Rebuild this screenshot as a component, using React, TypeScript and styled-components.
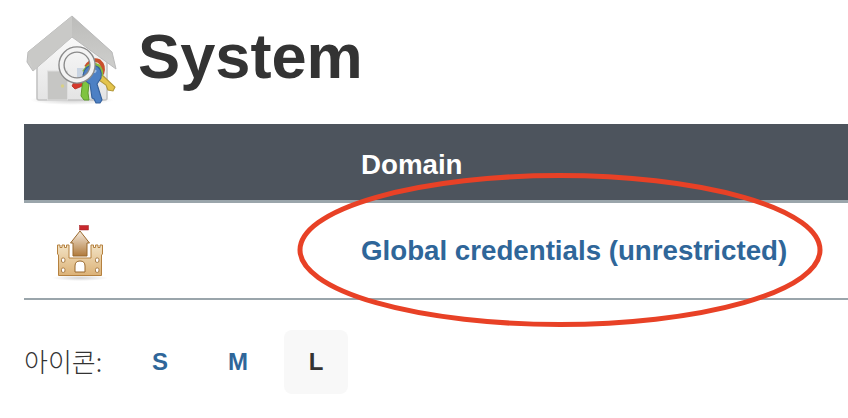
import React from "react";
import styled, { createGlobalStyle } from "styled-components";

const Global = createGlobalStyle`
  html, body { margin: 0; padding: 0; background: #fff; overflow: hidden; }
  body { font-family: "Liberation Sans", Arial, "Noto Sans CJK KR", sans-serif; color: #333; }
`;
const Page = styled.div`
  position: relative;
  width: 848px;
  height: 418px;
  overflow: hidden;
  padding-left: 24px;
  box-sizing: border-box;
`;
const Header = styled.header`
  display: flex;
  align-items: flex-start;
  height: 124px;
  box-sizing: border-box;
  padding-top: 10px;
  gap: 14px;
`;
const Title = styled.h1`
  margin: 15px 0 0;
  font-size: 63.2px;
  line-height: 1;
  font-weight: 700;
  color: #333;
`;
const Table = styled.div`
  width: 824px;
`;
const Head = styled.div`
  display: grid;
  grid-template-columns: 337px 1fr;
  height: 56px;
  padding-bottom: 20px;
  background: #4d545d;
  border-bottom: 3px solid #9aa5ab;
  align-items: end;
  font-size: 27.7px;
  font-weight: 700;
  color: #fff;
  line-height: 30px;
`;
const HeadCell = styled.div``;
const Row = styled.div`
  display: grid;
  grid-template-columns: 337px 1fr;
  height: 95px;
  align-items: center;
  border-bottom: 2px solid #9aa5ab;
`;
const IconCell = styled.div`
  display: flex;
  padding-left: 26px;
`;
const CredLink = styled.a`
  font-size: 27.7px;
  font-weight: 700;
  color: #2f6699;
  text-decoration: none;
`;
const Footer = styled.div`
  display: flex;
  align-items: center;
  height: 64px;
  margin-top: 30px;
`;
const Label = styled.span`
  font-family: "Noto Sans CJK KR", sans-serif;
  font-size: 26px;
  font-weight: 300;
  color: #333;
  width: 104px;
  padding-bottom: 4px;
  white-space: nowrap;
`;
const SizeButton = styled.span<{ $active?: boolean }>`
  display: flex;
  align-items: center;
  justify-content: center;
  width: 64px;
  height: 64px;
  margin-right: 14px;
  border-radius: 8px;
  font-size: 24px;
  font-weight: 700;
  color: ${(p) => (p.$active ? "#333" : "#2f6699")};
  background: ${(p) => (p.$active ? "#f8f8f8" : "transparent")};
`;
const Annotation = styled.svg`
  position: absolute;
  left: 0;
  top: 0;
  pointer-events: none;
`;
const Glyph = styled.svg`
  flex: none;
  display: block;
`;

const HouseIcon = () => (
  <Glyph width="100" height="100" viewBox="24 10 100 100">
    <defs>
      <radialGradient id="hshadow"><stop offset="0" stopColor="#bdbdbd" /><stop offset="1" stopColor="#fff" /></radialGradient>
      <linearGradient id="hwall" x1="0" y1="0" x2="0" y2="1"><stop offset="0" stopColor="#fafafa" /><stop offset="1" stopColor="#e4e4e4" /></linearGradient>
      <linearGradient id="hroof" x1="0" y1="0" x2="0" y2="1"><stop offset="0" stopColor="#bcbcba" /><stop offset="1" stopColor="#cfcfcd" /></linearGradient>
    </defs>
    <ellipse cx="72" cy="100" rx="42" ry="5" fill="url(#hshadow)" opacity="0.7" />
    <path d="M37 60 L72 34 L107 60 L107 98 Q107 100 105 100 L39 100 Q37 100 37 98 Z" fill="url(#hwall)" stroke="#c4c4c4" strokeWidth="1.6" />
    <rect x="47.5" y="71" width="20" height="29" fill="#c6c6c4" stroke="#dedede" strokeWidth="1" />
    <circle cx="62.5" cy="86" r="1.7" fill="#d8d088" />
    <path d="M72 16 L112 52 L116 69 L72 37 L33 71 L27 62 L28 52 Z" fill="url(#hroof)" stroke="#bababa" strokeWidth="1" strokeLinejoin="round" />
    <path d="M72 16 L72 37 L33 71 L28 52 Z" fill="#c9c9c7" />
    <rect x="77" y="68" width="12" height="14" fill="#c9d4e2" />
    <path d="M100 73 L115 87 L113 91 L108 90 L106 85 L96 78 Z" fill="#e4c44c" stroke="#b3983a" strokeWidth="1.1" />
    <path d="M74 82 L86 77 L90 82 L80 87 L75 89 L72 86 Z" fill="#d5392c" stroke="#b42c22" strokeWidth="0.8" />
    <path d="M84 72 L89 83 L88 93 L89 100 L84 100 L81 96 L82 87 L83 82 Z" fill="#7fc440" stroke="#5f9c2c" strokeWidth="1" />
    <path d="M86 67 Q92 58 99 61 Q105 66 102 74" fill="none" stroke="#c9502c" strokeWidth="4" />
    <path d="M84 72 Q90 62 98 66 Q102 70 101 76" fill="none" stroke="#86b93c" strokeWidth="4" />
    <path d="M83 75 Q85 65 94 65 Q103 68 101 78 L97 84 L102 100 L100 103 L96 103 L94 99 L92 98 L90 84 Q84 81 83 75 Z" fill="#4d80c4" stroke="#34609c" strokeWidth="1.1" />
    <path d="M88 74 Q92 69 96 72" fill="none" stroke="#fff" strokeOpacity="0.5" strokeWidth="3" />
    <circle cx="77" cy="65" r="15.5" fill="none" stroke="#8a8a8a" strokeWidth="6.5" />
    <circle cx="77" cy="65" r="15.5" fill="none" stroke="#f3f3f3" strokeWidth="3.8" />
  </Glyph>
);

const CastleIcon = () => (
  <Glyph width="60" height="64" viewBox="50 216 60 64">
    <defs>
      <linearGradient id="cbody" x1="0" y1="0" x2="0" y2="1"><stop offset="0" stopColor="#f2e2c4" /><stop offset="1" stopColor="#dcb277" /></linearGradient>
      <linearGradient id="ctower" x1="0" y1="0" x2="0" y2="1"><stop offset="0" stopColor="#f6ecdf" /><stop offset="1" stopColor="#b07a3c" /></linearGradient>
      <radialGradient id="cshadow"><stop offset="0" stopColor="#d4d4d4" /><stop offset="1" stopColor="#fff" /></radialGradient>
    </defs>
    <ellipse cx="80" cy="275" rx="28" ry="3" fill="url(#cshadow)" />
    <path d="M57.5 242 H60 V244.5 H62 V242 H64.5 V244.5 H66.5 V242 H69 V255 H91 V242 H93.5 V244.5 H95.5 V242 H98 V244.5 H100 V242 H102.5 V251 L101.5 252 V272.5 H58.5 V252 L57.5 251 Z" fill="url(#cbody)" stroke="#b5813f" strokeWidth="1" />
    <path d="M80 228 L89.5 240 L87 240 L87 253 L73 253 L73 240 L70.5 240 Z" fill="url(#ctower)" stroke="#99682c" strokeWidth="1" />
    <rect x="79.5" y="222.5" width="9" height="4.5" fill="#c8282d" stroke="#a31f23" strokeWidth="0.5" />
    <path d="M75 269 V263 Q75 258 80 258 Q85 258 85 263 V269 Z" fill="#fff" stroke="#99682c" strokeWidth="1" />
    <rect x="61.5" y="255" width="3.4" height="4.4" rx="1.4" fill="#fff" stroke="#99682c" strokeWidth="0.8" />
    <rect x="95.5" y="255" width="3.4" height="4.4" rx="1.4" fill="#fff" stroke="#99682c" strokeWidth="0.8" />
    <rect x="61.5" y="265" width="3.4" height="4.4" rx="1.4" fill="#fff" stroke="#99682c" strokeWidth="0.8" />
    <rect x="95.5" y="265" width="3.4" height="4.4" rx="1.4" fill="#fff" stroke="#99682c" strokeWidth="0.8" />
  </Glyph>
);

export default function App() {
  return (
    <Page>
      <Global />
      <Header>
        <HouseIcon />
        <Title>System</Title>
      </Header>
      <Table>
        <Head>
          <HeadCell />
          <HeadCell>Domain</HeadCell>
        </Head>
        <Row>
          <IconCell><CastleIcon /></IconCell>
          <div><CredLink href="#">Global credentials (unrestricted)</CredLink></div>
        </Row>
      </Table>
      <Footer>
        <Label>아이콘:</Label>
        <SizeButton>S</SizeButton>
        <SizeButton>M</SizeButton>
        <SizeButton $active>L</SizeButton>
      </Footer>
      <Annotation width="848" height="418" viewBox="0 0 848 418">
        <ellipse cx="560" cy="250" rx="260" ry="74.5" fill="none" stroke="#e84126" strokeWidth="5" />
      </Annotation>
    </Page>
  );
}
